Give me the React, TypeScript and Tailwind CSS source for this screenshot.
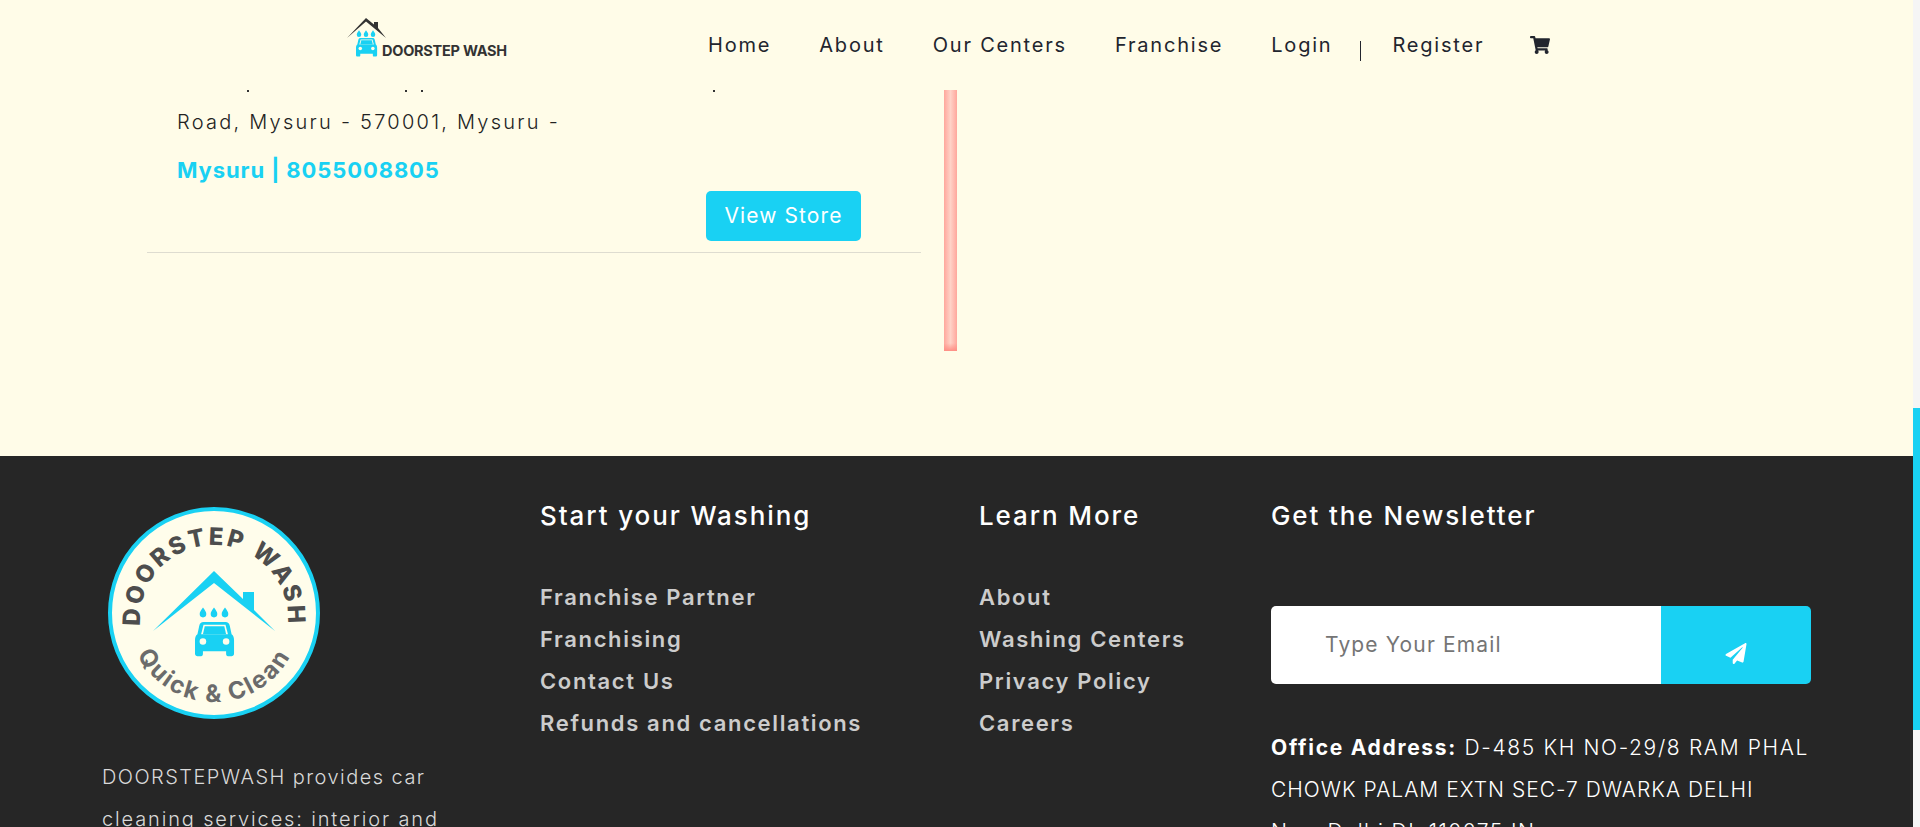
import React from 'react';
import { FaShoppingCart, FaPaperPlane } from 'react-icons/fa';

const navLinks = ['Home', 'About', 'Our Centers', 'Franchise', 'Login'];
const startLinks = ['Franchise Partner', 'Franchising', 'Contact Us', 'Refunds and cancellations'];
const learnLinks = ['About', 'Washing Centers', 'Privacy Policy', 'Careers'];

const CarIcon = ({ x, y, s, fill, bg }: { x: number; y: number; s: number; fill: string; bg: string }) => (
  <g transform={`translate(${x} ${y}) scale(${s})`}>
    <path
      d="M7 0H25C27 0 28 1 28.500 3L30 10C31.500 11 32 13 32 15V26C32 27 31 28 30 28H27C26 28 25.500 27 25.500 26V24H6.500V26C6.500 27 6 28 5 28H2C1 28 0 27 0 26V15C0 13 .500 11 2 10L3.500 3C4 1 5 0 7 0Z"
      fill={fill}
    />
    <path d="M7 2.200H25L27 10H5Z" fill={bg} />
    <path d="M8 3.500H24L25.500 10H6.500Z" fill={fill} />
    <circle cx="6.500" cy="16" r="2.700" fill={bg} />
    <circle cx="25.500" cy="16" r="2.700" fill={bg} />
  </g>
);

const Drop = ({ x, y, s, fill }: { x: number; y: number; s: number; fill: string }) => (
  <path
    transform={`translate(${x} ${y}) scale(${s})`}
    d="M0 -5C2 -2 3 -1 3 1A3 3 0 0 1 -3 1C-3 -1 -2 -2 0 -5Z"
    fill={fill}
  />
);

const HeaderLogo = () => (
  <svg width="165" height="45" viewBox="0 0 165 45" className="mt-[15px] shrink-0 self-start">
    <path d="M2 23L21 3L29 9.500V7H33V13L41 23L21 6.500Z" fill="#333333" />
    <Drop x={14} y={19} s={0.75} fill="#19d1f3" />
    <Drop x={21} y={19} s={0.75} fill="#19d1f3" />
    <Drop x={28} y={19} s={0.75} fill="#19d1f3" />
    <CarIcon x={11} y={23} s={0.66} fill="#19d1f3" bg="#fffce8" />
    <text x="37" y="41" fontFamily="Inter, sans-serif" fontWeight="700" fontSize="14.500" letterSpacing="-0.25" fill="#333333">
      DOORSTEP WASH
    </text>
  </svg>
);

const FooterLogo = () => (
  <svg width="212" height="212" viewBox="0 0 212 212" className="block">
    <defs>
      <path id="topArc" d="M32 112A74 74 0 0 1 180 112" />
      <path id="bottomArc" d="M24 135A86 86 0 0 0 188 135" />
    </defs>
    <circle cx="106" cy="106" r="104" fill="#fffdeb" stroke="#19d1f3" strokeWidth="4" />
    <text fontFamily="Inter, sans-serif" fontWeight="800" fontSize="24" fill="#4d4d4d" letterSpacing="2.500">
      <textPath href="#topArc" startOffset="50%" textAnchor="middle">DOORSTEP WASH</textPath>
    </text>
    <text fontFamily="Inter, sans-serif" fontWeight="700" fontSize="24" fill="#6b6b6b" letterSpacing="2">
      <textPath href="#bottomArc" startOffset="50%" textAnchor="middle">Quick &amp; Clean</textPath>
    </text>
    <path d="M45 124L106 64L135 92V85H146V103L167 124L106 76Z" fill="#19d1f3" />
    <Drop x={95} y={106} s={1.100} fill="#19d1f3" />
    <Drop x={106} y={106} s={1.100} fill="#19d1f3" />
    <Drop x={117} y={106} s={1.100} fill="#19d1f3" />
    <CarIcon x={87} y={115} s={1.220} fill="#19d1f3" bg="#fffdeb" />
  </svg>
);

const FooterLinks = ({ title, links, width }: { title: string; links: string[]; width: string }) => (
  <div className={width}>
    <h3 className="mb-[42px] mt-px h-9 text-[26px] leading-9 font-medium tracking-[1.9px] text-white">{title}</h3>
    {links.map((link) => (
      <a key={link} href="#" className="block text-[22px] leading-[42px] font-semibold tracking-[1.65px] text-[#cccccc]">
        {link}
      </a>
    ))}
  </div>
);

export default function App() {
  return (
    <div className="flex h-screen w-full overflow-hidden bg-[#fffce8] font-['Inter',sans-serif]">
      <div className="w-[1913px] shrink-0">
        <header className="flex h-[90px] items-center pl-[345px] text-[#22252e]">
          <HeaderLogo />
          <nav className="ml-[198px] flex items-center gap-[48px] text-[20px] tracking-[1.8px]">
            {navLinks.map((link) => (
              <a key={link} href="#">{link}</a>
            ))}
            <span className="-ml-[20px] mt-[12px] h-5 w-px bg-[#22252e]" />
            <a href="#" className="-ml-[17px]">Register</a>
            <FaShoppingCart className="-ml-[2px] h-[18px] w-[20px]" />
          </nav>
        </header>

        <section className="flex h-[366px] items-start pl-[147px]">
          <div className="w-[774px]">
            <div className="flex h-[2px] pl-[100px]">
              <span className="w-[2px] bg-[#333333]" />
              <span className="ml-[156px] w-[2px] bg-[#333333]" />
              <span className="ml-[14px] w-[2px] bg-[#333333]" />
              <span className="ml-[290px] w-[2px] bg-[#333333]" />
            </div>
            <div className="pl-[30px] pt-[9px]">
              <p className="text-[20px] leading-[42px] font-light tracking-[2.25px] text-[#222222]">
                Road, Mysuru - 570001, Mysuru -
              </p>
              <p className="mt-[6px] text-[22px] leading-[42px] font-bold tracking-[0.9px] text-[#19d1f3]">Mysuru | 8055008805</p>
            </div>
            <div className="flex justify-end pr-[60px]">
              <button className="h-[50px] w-[155px] rounded-[5px] bg-[#19d1f3] text-[21px] tracking-[1.1px] text-white">
                View Store
              </button>
            </div>
            <div className="mt-[11px] h-px bg-[#dedcd0]" />
          </div>
          <div className="ml-[23px] h-[261px] w-[13px] bg-[linear-gradient(to_bottom,transparent_97%,#ff8f85),linear-gradient(to_right,#ffa79c,#ffd2c7_50%,#ffa79c)]" />
        </section>

        <footer className="flex h-[371px] overflow-hidden bg-[#262626] pl-[102px] pt-[41px]">
          <div className="w-[438px]">
            <div className="ml-[6px] mt-[10px]">
              <FooterLogo />
            </div>
            <p className="mt-[37px] text-[20px] leading-[42px] font-light tracking-[1.45px] text-[#d9d9d9]">
              DOORSTEPWASH provides car
              <br />
              <span className="tracking-[1.85px]">cleaning services: interior and</span>
            </p>
          </div>
          <FooterLinks title="Start your Washing" links={startLinks} width="w-[439px]" />
          <FooterLinks title="Learn More" links={learnLinks} width="w-[292px]" />
          <div className="w-[540px]">
            <h3 className="mt-px h-9 text-[26px] leading-9 font-medium tracking-[1.9px] text-white">Get the Newsletter</h3>
            <div className="mt-[72px] flex h-[78px] overflow-hidden rounded-[5px]">
              <input
                placeholder="Type Your Email"
                className="w-[390px] bg-white pl-[54px] text-[21px] tracking-[1.15px] outline-none placeholder:text-[#757575]"
              />
              <button className="flex flex-1 justify-center bg-[#19d1f3] pt-[37px] text-white">
                <FaPaperPlane className="h-[21px] w-[22px]" />
              </button>
            </div>
            <p className="mt-[43px] whitespace-nowrap text-[21px] leading-[42px] font-light tracking-[1.65px] text-white">
              <strong className="font-bold tracking-[1.7px]">Office Address:</strong> D-485 KH NO-29/8 RAM PHAL
              <br />
              <span className="tracking-[1px]">CHOWK PALAM EXTN SEC-7 DWARKA DELHI</span>
              <br />
              <span className="tracking-[1.45px]">New Delhi DL 110075 IN</span>
            </p>
          </div>
        </footer>
      </div>
      <div className="w-[7px] shrink-0 bg-[#f5f5f5] pt-[408px]">
        <div className="h-[322px] bg-[#19d1f3]" />
      </div>
    </div>
  );
}
